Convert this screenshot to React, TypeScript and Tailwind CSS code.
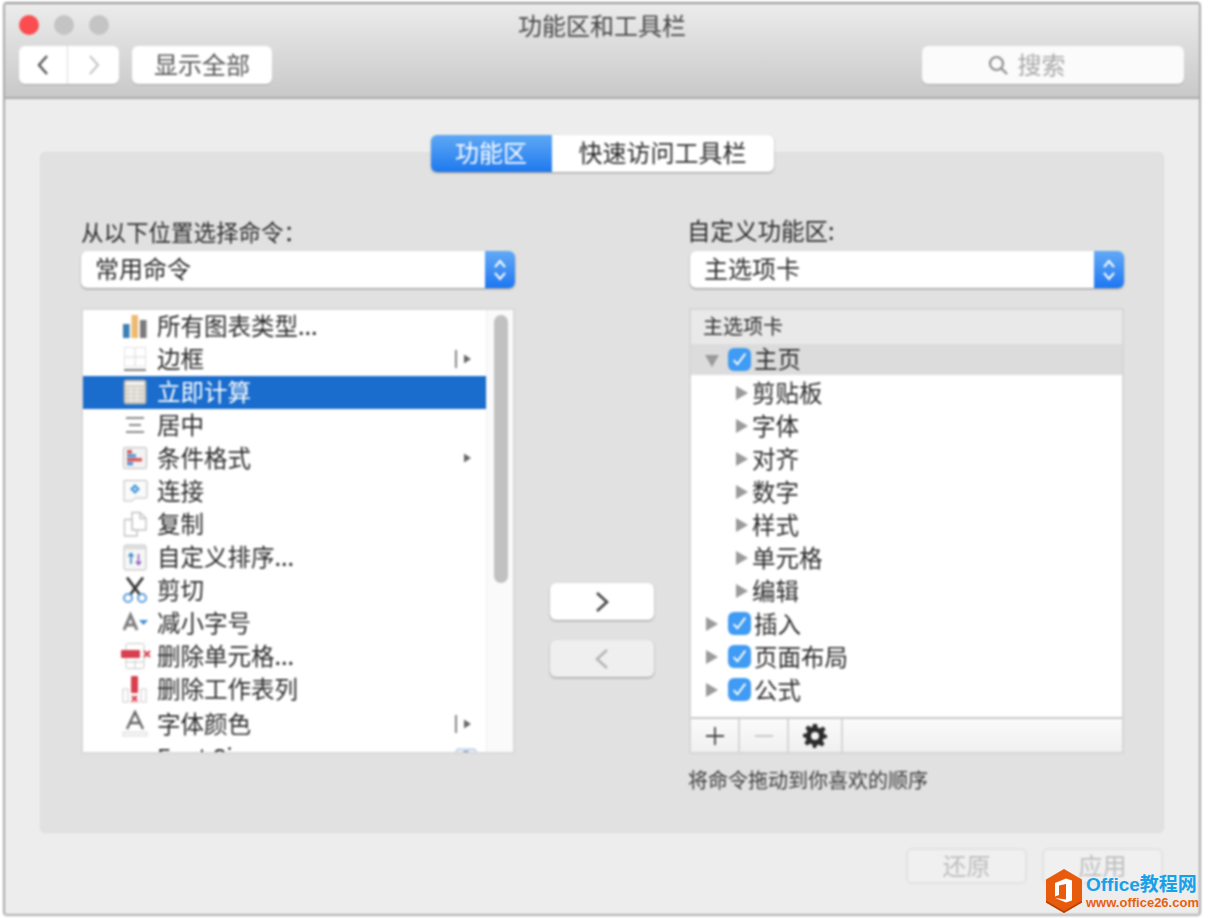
import React from "react";

const F = "font-['Noto_Sans_CJK_SC','Liberation_Sans',sans-serif]";

function Chart() {
  return (
    <svg width="28" height="28" viewBox="0 0 28 28">
      <rect x="2" y="12" width="6.5" height="14" fill="#3c7fb5" />
      <rect x="10.5" y="3" width="6.5" height="23" fill="#eeb971" />
      <rect x="19" y="8" width="6.5" height="18" fill="#7b7b7b" />
    </svg>
  );
}
function Border() {
  return (
    <svg width="28" height="28" viewBox="0 0 28 28" fill="none">
      <rect x="3.500" y="2.500" width="21" height="19" stroke="#e2e2e2" />
      <path d="M14 3v18M4 12h20" stroke="#d8d8d8" />
      <path d="M3 25h22" stroke="#555" strokeWidth="1.6" />
    </svg>
  );
}
function Calc() {
  return (
    <svg width="28" height="28" viewBox="0 0 28 28">
      <rect x="3" y="2" width="22" height="24" rx="2" fill="#d6d1c7" stroke="#9a9a9a" />
      <rect x="5" y="4" width="18" height="3" fill="#f4f4f4" />
      <path d="M5 10h18M5 14h18M5 18h18M5 22h18M10 9v15M16 9v15" stroke="#f2f2f2" strokeWidth="1" />
    </svg>
  );
}
function Center() {
  return (
    <svg width="28" height="28" viewBox="0 0 28 28" stroke="#8a8a8a" strokeWidth="1.8">
      <path d="M5 7h18M8 14h12M5 21h18" />
    </svg>
  );
}
function Cond() {
  return (
    <svg width="28" height="28" viewBox="0 0 28 28">
      <rect x="2.500" y="3.500" width="23" height="21" rx="1.500" fill="#f3f3f3" stroke="#bdbdbd" />
      <rect x="6" y="6" width="5" height="3.500" fill="#d95a5a" />
      <rect x="6" y="10" width="9" height="3.500" fill="#5c9bd8" />
      <rect x="6" y="14" width="15" height="3.500" fill="#d95a5a" />
      <rect x="6" y="18" width="6" height="3.500" fill="#5c9bd8" />
    </svg>
  );
}
function Link() {
  return (
    <svg width="28" height="28" viewBox="0 0 28 28" fill="none">
      <path d="M3 3.500h22a1 1 0 0 1 1 1V20a1 1 0 0 1-1 1H14l-3 3H3z" fill="#fafafa" stroke="#bdbdbd" />
      <path d="M14 7l5 5-5 5-5-5z" fill="#4d9ae0" />
      <path d="M14 10.500l1.500 1.500-1.500 1.500-1.500-1.500z" fill="#fff" />
    </svg>
  );
}
function Copy() {
  return (
    <svg width="28" height="28" viewBox="0 0 28 28" fill="none" stroke="#c2c2c2" strokeWidth="1.400">
      <path d="M11 2.500h8l6 6V20H11z" fill="#fff" />
      <path d="M19 2.500v6h6" />
      <path d="M3.500 9.500H11V20h5v6H3.500z" fill="#fff" />
    </svg>
  );
}
function Sort() {
  return (
    <svg width="28" height="28" viewBox="0 0 28 28" fill="none">
      <rect x="3" y="2" width="22" height="25" rx="2" fill="#f6f6f6" stroke="#bdbdbd" />
      <rect x="3.500" y="2.500" width="21" height="4" fill="#dddddd" />
      <path d="M10 21V11M7.500 13.500L10 10.500l2.500 3" stroke="#3e87c6" strokeWidth="1.600" />
      <path d="M17.500 11v10M15 18.500l2.500 3 2.500-3" stroke="#8a63b8" strokeWidth="1.600" />
    </svg>
  );
}
function Cut() {
  return (
    <svg width="28" height="28" viewBox="0 0 28 28" fill="none">
      <path d="M6 1.500L19 19M22 1.500L9 19" stroke="#333" strokeWidth="2.800" />
      <circle cx="7" cy="22" r="4" stroke="#5d9fdc" strokeWidth="2" />
      <circle cx="21" cy="22" r="4" stroke="#5d9fdc" strokeWidth="2" />
    </svg>
  );
}
function SmallerA() {
  return (
    <svg width="28" height="28" viewBox="0 0 28 28" fill="none">
      <path d="M3 21L9.500 6l6.500 15M5.500 16h8" stroke="#7c7c7c" strokeWidth="3" />
      <path d="M18 11h9l-4.500 5z" fill="#3f8fd6" />
    </svg>
  );
}
function DelCell() {
  return (
    <svg width="32" height="28" viewBox="0 0 32 28" fill="none">
      <rect x="5" y="1.500" width="18" height="25" rx="1.500" stroke="#c8c8c8" />
      <path d="M5 20h18M14 18v8" stroke="#c8c8c8" />
      <rect x="0" y="8" width="19" height="8" rx="1" fill="#d8404f" />
      <path d="M23 9l6 6M29 9l-6 6" stroke="#d8404f" strokeWidth="2" />
    </svg>
  );
}
function DelCol() {
  return (
    <svg width="28" height="28" viewBox="0 0 28 28" fill="none">
      <rect x="2" y="14" width="5" height="13" stroke="#cccccc" />
      <rect x="20" y="14" width="5" height="13" stroke="#cccccc" />
      <rect x="10" y="1" width="7" height="17" rx="1" fill="#d8404f" />
      <path d="M11 21l5 5M16 21l-5 5" stroke="#d8404f" strokeWidth="2" />
      <path d="M9 27h9" stroke="#e4a0a6" />
    </svg>
  );
}
function FontColor() {
  return (
    <svg width="28" height="28" viewBox="0 0 28 28" fill="none">
      <path d="M6 19L14 2l8 17M9 13h10" stroke="#666" strokeWidth="2.400" />
      <rect x="2" y="22" width="24" height="4" fill="#f5f5f5" stroke="#dcdcdc" />
    </svg>
  );
}

function SepArrow() {
  return (
    <svg width="18" height="22" viewBox="0 0 18 22">
      <path d="M1 2v18" stroke="#555" strokeWidth="1.400" />
      <path d="M9 6.500l7 4.500-7 4.500z" fill="#666" />
    </svg>
  );
}
function Arrow() {
  return (
    <svg width="18" height="22" viewBox="0 0 18 22">
      <path d="M9 6.500l7 4.500-7 4.500z" fill="#666" />
    </svg>
  );
}
function SizeBox() {
  return (
    <svg width="22" height="22" viewBox="0 0 22 22" className="mt-[4px] -mr-[4px]">
      <rect x="1" y="1" width="20" height="18" rx="2" fill="#e4ecf7" stroke="#a9bdd6" />
      <path d="M8 3h6l-3 3z" fill="#4f76a8" />
    </svg>
  );
}

const commands: { icon: React.ReactNode; label: string; tail?: React.ReactNode; sel?: boolean; mt?: boolean }[] = [
  { icon: <Chart />, label: "所有图表类型..." },
  { icon: <Border />, label: "边框", tail: <SepArrow /> },
  { icon: <Calc />, label: "立即计算", sel: true },
  { icon: <Center />, label: "居中" },
  { icon: <Cond />, label: "条件格式", tail: <Arrow /> },
  { icon: <Link />, label: "连接" },
  { icon: <Copy />, label: "复制" },
  { icon: <Sort />, label: "自定义排序..." },
  { icon: <Cut />, label: "剪切" },
  { icon: <SmallerA />, label: "减小字号" },
  { icon: <DelCell />, label: "删除单元格..." },
  { icon: <DelCol />, label: "删除工作表列" },
  { icon: <FontColor />, label: "字体颜色", tail: <SepArrow />, mt: true },
  { icon: null, label: "Font Size", tail: <SizeBox /> },
];

function Disclosure({ open }: { open?: boolean }) {
  return (
    <svg width="16" height="16" viewBox="0 0 16 16" className="shrink-0">
      {open ? <path d="M1 3h14l-7 12z" fill="#9a9a9a" /> : <path d="M2 1l12 7-12 7z" fill="#9a9a9a" />}
    </svg>
  );
}

function Check() {
  return (
    <span className="flex h-[23px] w-[23px] shrink-0 items-center justify-center rounded-[6px] bg-[#3f9bf3]">
      <svg width="17" height="17" viewBox="0 0 16 16" fill="none">
        <path d="M2.500 8.500l3.500 4 7.500-10" stroke="#fff" strokeWidth="1.800" />
      </svg>
    </span>
  );
}

function Select({ value }: { value: string }) {
  return (
    <div className="flex h-[37px] overflow-hidden rounded-[6px] bg-white shadow-[0_1px_2px_rgba(0,0,0,0.4)]">
      <div className="flex flex-1 items-center pb-[4px] pl-[14px] text-[24px] leading-none text-[#2a2a2a]">{value}</div>
      <div className="flex w-[30px] items-center justify-center bg-gradient-to-b from-[#62aaf6] to-[#1b76f2]">
        <svg width="16" height="26" viewBox="0 0 16 26" fill="none" stroke="#fff" strokeWidth="2">
          <path d="M3 10l5-6 5 6M3 16l5 6 5-6" />
        </svg>
      </div>
    </div>
  );
}

function ArrowButton({ dir, disabled }: { dir: "left" | "right"; disabled?: boolean }) {
  return (
    <div
      className={
        "flex h-[37px] w-[104px] items-center justify-center rounded-[6px] shadow-[0_1px_2px_rgba(0,0,0,0.35)] " +
        (disabled ? "bg-[#efefef]" : "bg-white")
      }
    >
      <svg width="18" height="22" viewBox="0 0 18 22" fill="none" stroke={disabled ? "#b5b5b5" : "#444"} strokeWidth="2.600">
        <path d={dir === "right" ? "M4 2l10 9-10 9" : "M14 2L4 11l10 9"} />
      </svg>
    </div>
  );
}

function TreeSub({ label }: { label: string }) {
  return (
    <div className="flex h-[33px] items-center pb-[2px] pl-[43px] text-[23.5px] leading-none text-[#2a2a2a]">
      <Disclosure />
      <span className="ml-[2px]">{label}</span>
    </div>
  );
}

function TreeTop({ label }: { label: string }) {
  return (
    <div className="flex h-[33px] items-center pb-[2px] pl-[13px] text-[23.5px] leading-none text-[#2a2a2a]">
      <Disclosure />
      <span className="ml-[8px] mr-[3px] flex"><Check /></span>
      <span>{label}</span>
    </div>
  );
}

export default function App() {
  return (
    <div className={"relative h-[918px] w-[1208px] overflow-hidden bg-white " + F}>
      <div className="ml-[3px] mt-[2px] flex h-[914px] w-[1198px] flex-col overflow-hidden rounded-[4px] border-x-2 border-t-2 border-b-2 border-x-[#a9a9a9] border-t-[#9a9a9a] border-b-[#b0b0b0] bg-[#ededed] blur-[0.8px]">
        {/* Title bar */}
        <div className="h-[95px] shrink-0 border-b-2 border-[#aaaaaa] bg-gradient-to-b from-[#ececec] to-[#c9c9c9] px-[14px]">
          <div className="relative flex h-[42px] items-center">
            <span className="h-[20px] w-[20px] rounded-full bg-[#fb4d4f]" />
            <span className="ml-[15px] h-[20px] w-[20px] rounded-full bg-[#c4c4c4]" />
            <span className="ml-[15px] h-[20px] w-[20px] rounded-full bg-[#c4c4c4]" />
            <span className="absolute left-0 right-0 top-[4px] text-center text-[24px] leading-[34px] text-[#444]">
              功能区和工具栏
            </span>
          </div>
          <div className="flex items-center">
            <div className="flex h-[38px] w-[100px] overflow-hidden rounded-[6px] bg-white shadow-[0_1px_1px_rgba(0,0,0,0.2)]">
              <div className="flex w-[49px] items-center justify-center border-r border-[#dddddd]">
                <svg width="16" height="24" viewBox="0 0 16 24" fill="none" stroke="#555" strokeWidth="2.400">
                  <path d="M12 3L4 12l8 9" />
                </svg>
              </div>
              <div className="flex flex-1 items-center justify-center">
                <svg width="16" height="24" viewBox="0 0 16 24" fill="none" stroke="#c8c8c8" strokeWidth="2.200">
                  <path d="M4 3l8 9-8 9" />
                </svg>
              </div>
            </div>
            <div className="ml-[13px] flex h-[38px] w-[140px] items-center justify-center rounded-[6px] bg-white pb-[2px] text-[24px] leading-none text-[#555] shadow-[0_1px_1px_rgba(0,0,0,0.2)]">
              显示全部
            </div>
            <div className="ml-auto mr-[1px] flex h-[38px] w-[262px] items-center justify-center rounded-[6px] bg-[#fbfbfb] pb-[2px] pr-[54px] text-[24px] leading-none text-[#a9a9a9] shadow-[0_1px_1px_rgba(0,0,0,0.2)]">
              <svg width="22" height="22" viewBox="0 0 22 22" fill="none" stroke="#8c8c8c" strokeWidth="2.200" className="mr-[9px] mt-[2px]">
                <circle cx="9.500" cy="9.500" r="6.500" />
                <path d="M14.500 14.500l5.500 5.500" />
              </svg>
              搜索
            </div>
          </div>
        </div>

        {/* Body */}
        <div className="flex min-h-0 flex-1 flex-col px-[35px] pt-[36px]">
          <div className="relative z-10 flex justify-center">
            <div className="flex h-[37px] overflow-hidden rounded-[6px] bg-white text-[24px] leading-none shadow-[0_1px_2px_rgba(0,0,0,0.35)]">
              <div className="flex w-[121px] items-center justify-center bg-gradient-to-b from-[#5da8f5] to-[#1d78ee] pb-[3px] text-white">
                功能区
              </div>
              <div className="flex w-[222px] items-center justify-center pb-[3px] text-[#2a2a2a]">快速访问工具栏</div>
            </div>
          </div>

          <div className="-mt-[20px] flex h-[681px] shrink-0 rounded-[5px] border border-[#dcdcdc] bg-[#e1e1e1] pl-[40px] pt-[64px]">
            {/* Left column */}
            <div className="flex w-[434px] flex-col">
              <div className="flex h-[34px] items-center pb-[6px] text-[22.5px] leading-none text-[#2a2a2a]">从以下位置选择命令：</div>
              <Select value="常用命令" />
              <div className="mt-[20px] flex h-[446px] overflow-hidden border-2 border-[#d9d9d9] bg-white">
                <div className="min-w-0 flex-1 overflow-hidden">
                  {commands.map((c) => (
                    <div
                      key={c.label}
                      className={
                        "flex h-[33px] items-center pb-[2px] pl-[38px] pr-[13px] text-[23.5px] leading-none " +
                        (c.mt ? "mt-[2px] " : "") +
                        (c.sel ? "bg-[#1a6dcd] text-white" : "text-[#2a2a2a]")
                      }
                    >
                      <span className="flex w-[36px] shrink-0 items-center">{c.icon}</span>
                      <span className="flex-1">{c.label}</span>
                      {c.tail}
                    </div>
                  ))}
                </div>
                <div className="w-[27px] shrink-0 border-l border-[#f0f0f0] bg-[#fafafa] pl-[7px] pt-[5px]">
                  <div className="h-[268px] w-[14px] rounded-full bg-[#c1c1c1]" />
                </div>
              </div>
            </div>

            {/* Middle column */}
            <div className="ml-[35px] flex w-[104px] flex-col pt-[366px]">
              <ArrowButton dir="right" />
              <div className="mt-[20px]">
                <ArrowButton dir="left" disabled />
              </div>
            </div>

            {/* Right column */}
            <div className="ml-[35px] flex w-[435px] flex-col">
              <div className="-ml-[2px] flex h-[34px] items-center pb-[6px] text-[23.5px] leading-none text-[#2a2a2a]">自定义功能区:</div>
              <div className="pl-[1px]">
                <Select value="主选项卡" />
              </div>
              <div className="mt-[20px] flex h-[446px] flex-col overflow-hidden border-2 border-[#d6d6d6] bg-white">
                <div className="flex h-[34px] shrink-0 items-center bg-[#e9e9e9] pb-[2px] pl-[12px] text-[20px] leading-none text-[#2a2a2a]">
                  主选项卡
                </div>
                <div className="flex h-[31px] shrink-0 items-center bg-[#dcdcdc] pl-[13px] text-[23.5px] leading-none text-[#2a2a2a]">
                  <Disclosure open />
                  <span className="ml-[8px] mr-[3px] flex"><Check /></span>
                  <span className="pb-[2px]">主页</span>
                </div>
                <div className="min-h-0 flex-1 pt-[2px]">
                  {["剪贴板", "字体", "对齐", "数字", "样式", "单元格", "编辑"].map((t) => (
                    <TreeSub key={t} label={t} />
                  ))}
                  {["插入", "页面布局", "公式"].map((t) => (
                    <TreeTop key={t} label={t} />
                  ))}
                </div>
                <div className="flex h-[35px] shrink-0 border-t-2 border-[#c9c9c9] bg-gradient-to-b from-[#fbfbfb] to-[#f0f0f0]">
                  <div className="flex w-[49px] items-center justify-center border-r-2 border-[#d6d6d6]">
                    <svg width="20" height="20" viewBox="0 0 20 20" stroke="#444" strokeWidth="1.800">
                      <path d="M10 1v18M1 10h18" />
                    </svg>
                  </div>
                  <div className="flex w-[49px] items-center justify-center border-r-2 border-[#d6d6d6]">
                    <svg width="20" height="20" viewBox="0 0 20 20" stroke="#c9c9c9" strokeWidth="1.800">
                      <path d="M1 10h18" />
                    </svg>
                  </div>
                  <div className="flex w-[54px] items-center justify-center border-r-2 border-[#d6d6d6]">
                    <svg width="24" height="24" viewBox="0 0 24 24">
                      <path
                        fillRule="evenodd"
                        fill="#2b2b2b"
                        d="M10 0h4l.7 3.600 2 .9L20 2.400 22.600 5l-2.100 3.300.9 2L24 11v3l-3.600.7-.9 2 2.100 3.300-2.600 2.600-3.300-2.100-2 .9L13 24h-3l-.7-3.600-2-.9L4 21.600 1.400 19l2.100-3.300-.9-2L0 13v-3l3.600-.7.9-2L2.400 4 5 1.400l3.300 2.100 1-.4zM12 8a4 4 0 1 0 0 8 4 4 0 0 0 0-8z"
                      />
                    </svg>
                  </div>
                </div>
              </div>
              <div className="-ml-[1px] mt-[11px] flex h-[30px] items-center text-[20px] leading-none text-[#3a3a3a]">
                将命令拖动到你喜欢的顺序
              </div>
            </div>
          </div>

          <div className="mt-[15px] flex justify-end gap-[15px] pr-[1px]">
            {["还原", "应用"].map((t) => (
              <div
                key={t}
                className="flex h-[36px] w-[121px] items-center justify-center rounded-[6px] border-2 border-[#e2e2e2] bg-[#f0f0f0] pb-[3px] text-[24px] leading-none text-[#bdbdbd]"
              >
                {t}
              </div>
            ))}
          </div>
        </div>
      </div>

      {/* Watermark over the window */}
      <div className="absolute left-[1045px] top-[869px] flex items-start">
        <svg width="38" height="44" viewBox="0 0 38 44">
          <path d="M19 0l18 10.500v23L19 44 1 33.500v-23z" fill="#e85a0c" />
          <path d="M1 33.500L19 44l18-10.500v-2L19 42 1 31.500z" fill="#b94507" />
          <path d="M10 14l11-4.500 6 2v20l-6 2-11-4.500 11 1.500V15l-7 1.500V26l-4 1.500z" fill="#fff" />
        </svg>
        <div className="ml-[3px] mt-[5px] flex flex-col">
          <span className="font-['Liberation_Sans','Noto_Sans_CJK_SC',sans-serif] text-[19px] font-bold leading-[22px] text-[#18a0e8]">
            Office教程网
          </span>
          <span className="-mt-[1px] font-['Liberation_Sans',sans-serif] text-[13px] font-bold leading-[16px] text-[#e8610f]">
            www.office26.com
          </span>
        </div>
      </div>
    </div>
  );
}
